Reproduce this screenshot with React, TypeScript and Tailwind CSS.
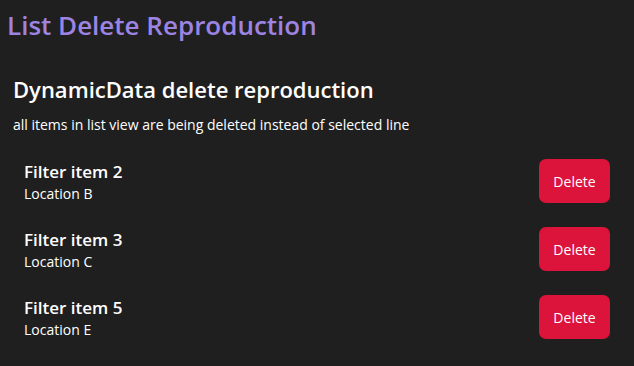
const items = [
  { name: "Filter item 2", location: "Location B" },
  { name: "Filter item 3", location: "Location C" },
  { name: "Filter item 5", location: "Location E" },
];

export default function App() {
  return (
    <div className="w-[634px] h-[366px] bg-[#1f1f1f] text-white overflow-hidden font-['Open_Sans',sans-serif]">
      <h1 className="pl-[7px] pt-[7px] text-[26px] leading-[36px] font-semibold text-[#9d84e2]">
        List Delete Reproduction
      </h1>
      <div className="px-[13px] pt-[31px]">
        <h2 className="text-[22px] leading-[30px] font-semibold">DynamicData delete reproduction</h2>
        <p className="mt-[11px] text-[14px] leading-[20px]">
          all items in list view are being deleted instead of selected line
        </p>
      </div>
      <div className="flex flex-col gap-[24px] pl-[24px] pr-[24px] pt-[24px]">
        {items.map((item) => (
          <div key={item.name} className="flex items-center justify-between h-[44px]">
            <div className="flex flex-col">
              <span className="text-[17px] leading-[26px] font-semibold">{item.name}</span>
              <span className="text-[14px] leading-[18px]">{item.location}</span>
            </div>
            <button className="w-[71px] h-[44px] rounded-[7px] bg-[#dc143c] text-[14px] text-white">
              Delete
            </button>
          </div>
        ))}
      </div>
    </div>
  );
}
